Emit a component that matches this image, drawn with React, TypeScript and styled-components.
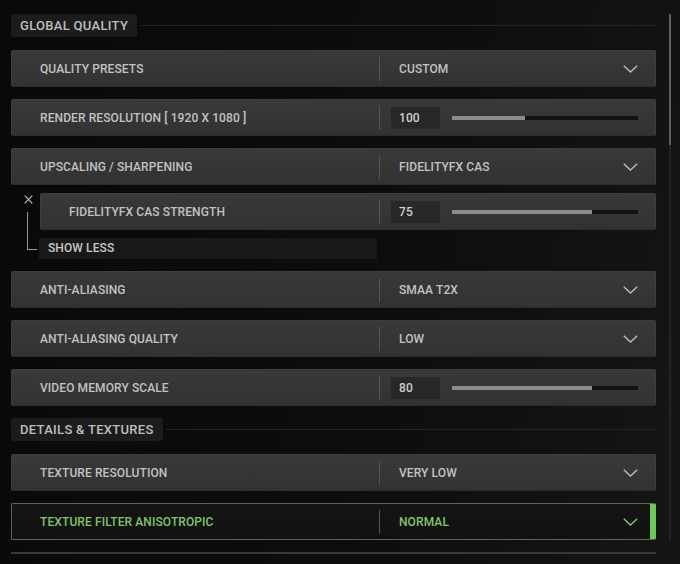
import React from 'react'
import styled, { createGlobalStyle, css } from 'styled-components'

const GlobalStyle = createGlobalStyle`
  html, body {
    margin: 0;
    padding: 0;
    background: #0b0b0b;
  }
  * {
    box-sizing: border-box;
  }
`

const Page = styled.div`
  display: flex;
  width: 680px;
  height: 564px;
  overflow: hidden;
  padding: 14px 0 0 11px;
  background: linear-gradient(100deg, #090909 0%, #0d0d0d 55%, #151515 100%);
  font-family: Roboto, 'Liberation Sans', sans-serif;
  font-weight: 500;
  color: #c2c2c2;
`

const Content = styled.div`
  width: 645px;
  display: flex;
  flex-direction: column;
  gap: 12px;
`

const SectionHeader = styled.div`
  display: flex;
  align-items: center;
  height: 23px;
  margin-bottom: 1px;
`

const HeaderTag = styled.div`
  height: 23px;
  line-height: 23px;
  padding: 0 9px;
  background: #1c1c1c;
  border-radius: 3px;
  font-size: 13px;
  letter-spacing: 0.3px;
  color: #bebebe;
`

const HeaderRule = styled.div`
  flex: 1;
  height: 1px;
  margin-left: 3px;
  background: #242424;
`

const Row = styled.div<{ $active?: boolean }>`
  display: flex;
  align-items: center;
  height: 37px;
  border-radius: 2px;
  border: 1px solid #3e3e3e;
  border-bottom-color: #2c2c2c;
  background: linear-gradient(180deg, #393939 0%, #323232 100%);
  font-size: 12px;
  letter-spacing: 0.1px;

  ${({ $active }) =>
    $active &&
    css`
      border-color: #4b7342;
      border-right-color: #6dc85c;
      background: linear-gradient(180deg, #151515 0%, #111111 100%);
      box-shadow: inset -5px 0 0 #6dc85c;
      color: #80c46d;
    `}
`

const Label = styled.div`
  flex: 1;
  padding-left: 28px;
  white-space: nowrap;
`

const ValueArea = styled.div`
  width: 276px;
  flex-shrink: 0;
  height: 100%;
  display: flex;
  align-items: center;
`

const Divider = styled.div`
  width: 1px;
  height: 24px;
  background: #555555;
`

const ValueText = styled.div`
  flex: 1;
  padding-left: 19px;
  white-space: nowrap;
`

const ChevronIcon = styled.svg`
  width: 15px;
  height: 8px;
  margin-right: 17px;
  flex-shrink: 0;
`

const NumBox = styled.div`
  width: 49px;
  height: 22px;
  margin-left: 11px;
  padding-left: 8px;
  line-height: 22px;
  background: #282828;
  color: #cfcfcf;
`

const Track = styled.div`
  flex: 1;
  height: 4px;
  margin: 0 17px 0 12px;
  background: #121212;
  display: flex;
`

const Fill = styled.div`
  height: 100%;
  background: #8c8c8c;
`

const ExpandGroup = styled.div`
  display: flex;
  flex-direction: column;
  gap: 8px;
`

const SubGroup = styled.div`
  display: flex;
`

const Gutter = styled.div`
  width: 29px;
  flex-shrink: 0;
  display: flex;
  flex-direction: column;
`

const CloseIcon = styled.svg`
  width: 9px;
  height: 9px;
  margin: 2px 0 0 13px;
`

const Bracket = styled.div`
  width: 10px;
  height: 38px;
  margin: 8px 0 0 16px;
  border-left: 1px solid #9c9c9c;
  border-bottom: 1px solid #9c9c9c;
`

const SubColumn = styled.div`
  flex: 1;
  display: flex;
  flex-direction: column;
  gap: 8px;
`

const ShowLess = styled.div`
  width: 338px;
  height: 21px;
  margin-left: -1px;
  padding-left: 9px;
  line-height: 21px;
  background: #191919;
  font-size: 12px;
  letter-spacing: 0.1px;
  color: #c8c8c8;
`

const BottomRule = styled.div`
  height: 2px;
  background: #393939;
`

const Scrollbar = styled.div`
  width: 2px;
  height: 526px;
  margin-left: 13px;
  background: #232323;
`

const Thumb = styled.div`
  height: 131px;
  background: #5f5f5f;
`

const Chevron = ({ color }: { color: string }) => (
  <ChevronIcon viewBox="0 0 15 8">
    <polyline points="0.8,0.8 7.5,7 14.2,0.8" fill="none" stroke={color} strokeWidth="1.5" />
  </ChevronIcon>
)

type SelectProps = { label: string; value: string; active?: boolean }

const SelectRow = ({ label, value, active }: SelectProps) => (
  <Row $active={active}>
    <Label>{label}</Label>
    <ValueArea>
      <Divider />
      <ValueText>{value}</ValueText>
      <Chevron color={active ? '#7cc66a' : '#b9b9b9'} />
    </ValueArea>
  </Row>
)

type SliderProps = { label: string; value: number; fill: number }

const SliderRow = ({ label, value, fill }: SliderProps) => (
  <Row>
    <Label>{label}</Label>
    <ValueArea>
      <Divider />
      <NumBox>{value}</NumBox>
      <Track>
        <Fill style={{ width: `${fill}%` }} />
      </Track>
    </ValueArea>
  </Row>
)

export default function App() {
  return (
    <>
      <GlobalStyle />
      <Page>
        <Content>
          <SectionHeader>
            <HeaderTag>GLOBAL QUALITY</HeaderTag>
            <HeaderRule />
          </SectionHeader>
          <SelectRow label="QUALITY PRESETS" value="CUSTOM" />
          <SliderRow label="RENDER RESOLUTION [ 1920 X 1080 ]" value={100} fill={39} />
          <ExpandGroup>
            <SelectRow label="UPSCALING / SHARPENING" value="FIDELITYFX CAS" />
            <SubGroup>
              <Gutter>
                <CloseIcon viewBox="0 0 9 9">
                  <path d="M0.7 0.7 L8.3 8.3 M8.3 0.7 L0.7 8.3" stroke="#bdbdbd" strokeWidth="1.2" />
                </CloseIcon>
                <Bracket />
              </Gutter>
              <SubColumn>
                <SliderRow label="FIDELITYFX CAS STRENGTH" value={75} fill={75} />
                <ShowLess>SHOW LESS</ShowLess>
              </SubColumn>
            </SubGroup>
          </ExpandGroup>
          <SelectRow label="ANTI-ALIASING" value="SMAA T2X" />
          <SelectRow label="ANTI-ALIASING QUALITY" value="LOW" />
          <SliderRow label="VIDEO MEMORY SCALE" value={80} fill={75} />
          <SectionHeader>
            <HeaderTag>DETAILS &amp; TEXTURES</HeaderTag>
            <HeaderRule />
          </SectionHeader>
          <SelectRow label="TEXTURE RESOLUTION" value="VERY LOW" />
          <SelectRow label="TEXTURE FILTER ANISOTROPIC" value="NORMAL" active />
          <BottomRule />
        </Content>
        <Scrollbar>
          <Thumb />
        </Scrollbar>
      </Page>
    </>
  )
}
